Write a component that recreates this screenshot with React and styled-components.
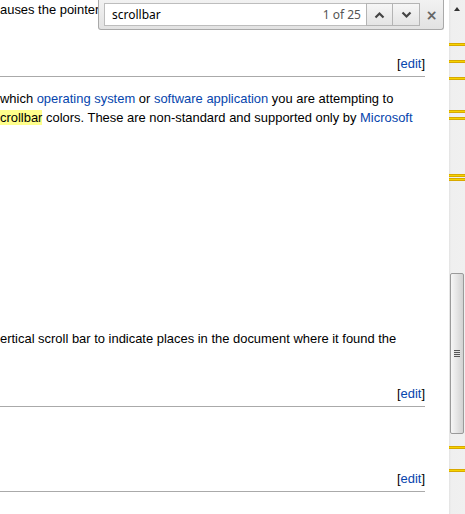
import React from 'react';
import styled, { createGlobalStyle } from 'styled-components';

const GlobalStyle = createGlobalStyle`
	html, body {
		margin: 0;
		padding: 0;
		background: #fff;
		overflow: hidden;
	}
`;

const MARKS = [43, 60, 77, 110, 117, 174, 178, 446, 469];

function Edit() {
	return (
		<EditLink>
			[<a href="#edit">edit</a>]
		</EditLink>
	);
}

function ChevronUp() {
	return (
		<svg width="11" height="8" viewBox="0 0 11 8">
			<path d="M1.5 6.5 L5.5 2.5 L9.5 6.5" fill="none" stroke="#444" strokeWidth="2.2" />
		</svg>
	);
}

function ChevronDown() {
	return (
		<svg width="11" height="8" viewBox="0 0 11 8">
			<path d="M1.5 1.5 L5.5 5.5 L9.5 1.5" fill="none" stroke="#444" strokeWidth="2.2" />
		</svg>
	);
}

export default function App() {
	return (
		<>
			<GlobalStyle />
			<Window>
				<Content>
					<Line>auses the pointer</Line>
					<Heading $top={31}>
						<Edit />
					</Heading>
					<Line $top={12}>
						which <Link>operating system</Link> or <Link>software application</Link> you are attempting to
					</Line>
					<Line>
						<Hit>crollbar</Hit> colors. These are non-standard and supported only by <Link>Microsoft</Link>
					</Line>
					<Line $top={202}>
						ertical scroll bar to indicate places in the document where it found the
					</Line>
					<Heading $top={32}>
						<Edit />
					</Heading>
					<Heading $top={58}>
						<Edit />
					</Heading>

					<FindBar>
						<FindField>
							<Query>scrollbar</Query>
							<Count>1 of 25</Count>
						</FindField>
						<NavButton $first>
							<ChevronUp />
						</NavButton>
						<NavButton>
							<ChevronDown />
						</NavButton>
						<Close>×</Close>
					</FindBar>
				</Content>

				<Scrollbar>
					<UpArrow />
					{MARKS.map((y) => (
						<Mark key={y} style={{ top: y }} />
					))}
					<Thumb>
						<Grip />
					</Thumb>
				</Scrollbar>
			</Window>
		</>
	);
}

// STYLES
const Window = styled.div`
	display: flex;
	width: 465px;
	height: 514px;
	overflow: hidden;
`;

const Content = styled.div`
	position: relative;
	flex: 1;
	display: flex;
	flex-direction: column;
	padding-right: 24px;
	font-family: 'Liberation Sans', Arial, sans-serif;
	font-size: 12.95px;
	color: #000;
`;

const Line = styled.div`
	margin-top: ${(p) => p.$top || 0}px;
	line-height: 19px;
	white-space: nowrap;
`;

const Link = styled.a`
	color: #0645ad;
	text-decoration: none;
`;

const Hit = styled.span`
	background: #ffff8c;
`;

const Heading = styled.div`
	margin-top: ${(p) => p.$top}px;
	height: 26px;
	display: flex;
	align-items: center;
	justify-content: flex-end;
	border-bottom: 1px solid #aaa;
`;

const EditLink = styled.span`
	line-height: 19px;

	a {
		color: #0645ad;
		text-decoration: none;
	}
`;

const FindBar = styled.div`
	position: absolute;
	top: 0;
	left: 98px;
	width: 346px;
	height: 30px;
	box-sizing: border-box;
	display: flex;
	align-items: flex-start;
	padding: 3px 0 0 5px;
	background: linear-gradient(#f2f2f2, #e2e2e2);
	border: 1px solid #a9a9a9;
	border-top: none;
	border-radius: 0 0 3px 3px;
	font-family: 'Noto Sans', 'Open Sans', sans-serif;
	font-size: 12px;
`;

const FindField = styled.div`
	width: 262px;
	height: 23px;
	box-sizing: border-box;
	display: flex;
	align-items: center;
	justify-content: space-between;
	padding: 0 5px 0 7px;
	background: #fff;
	border: 1px solid #bdbdbd;
	border-right: none;
`;

const Query = styled.span`
	color: #000;
`;

const Count = styled.span`
	color: #555;
`;

const NavButton = styled.div`
	width: 27px;
	height: 23px;
	box-sizing: border-box;
	display: flex;
	align-items: center;
	justify-content: center;
	background: linear-gradient(#f6f6f6, #e4e4e4);
	border: 1px solid #b4b4b4;
	border-left: ${(p) => (p.$first ? '1px solid #b4b4b4' : 'none')};
`;

const Close = styled.div`
	flex: 1;
	height: 23px;
	display: flex;
	align-items: center;
	justify-content: center;
	font-family: 'DejaVu Sans', sans-serif;
	font-size: 14px;
	font-weight: bold;
	color: #666;
`;

const Scrollbar = styled.div`
	position: relative;
	width: 16px;
	flex: none;
	background: linear-gradient(90deg, #e2e2e2 0, #efefef 2px, #f0f0f0 100%);
`;

const UpArrow = styled.div`
	position: absolute;
	top: 7px;
	left: 5px;
	width: 0;
	height: 0;
	border-left: 3.5px solid transparent;
	border-right: 3.5px solid transparent;
	border-bottom: 4px solid #333;
`;

const Mark = styled.div`
	position: absolute;
	left: 0;
	right: 0;
	height: 1px;
	background: #f5d400;
	border-top: 1px solid #d8a800;
	border-bottom: 1px solid #d8a800;
`;

const Thumb = styled.div`
	position: absolute;
	top: 273px;
	left: 1px;
	width: 14px;
	height: 161px;
	box-sizing: border-box;
	display: flex;
	align-items: center;
	justify-content: center;
	border: 1px solid #9a9a9a;
	border-radius: 2px;
	background: linear-gradient(90deg, #f6f6f6 0%, #e8e8e8 40%, #d2d2d2 100%);
`;

const Grip = styled.div`
	width: 6px;
	height: 7px;
	background: repeating-linear-gradient(#555 0, #555 1px, #e0e0e0 1px, #e0e0e0 2px);
`;
